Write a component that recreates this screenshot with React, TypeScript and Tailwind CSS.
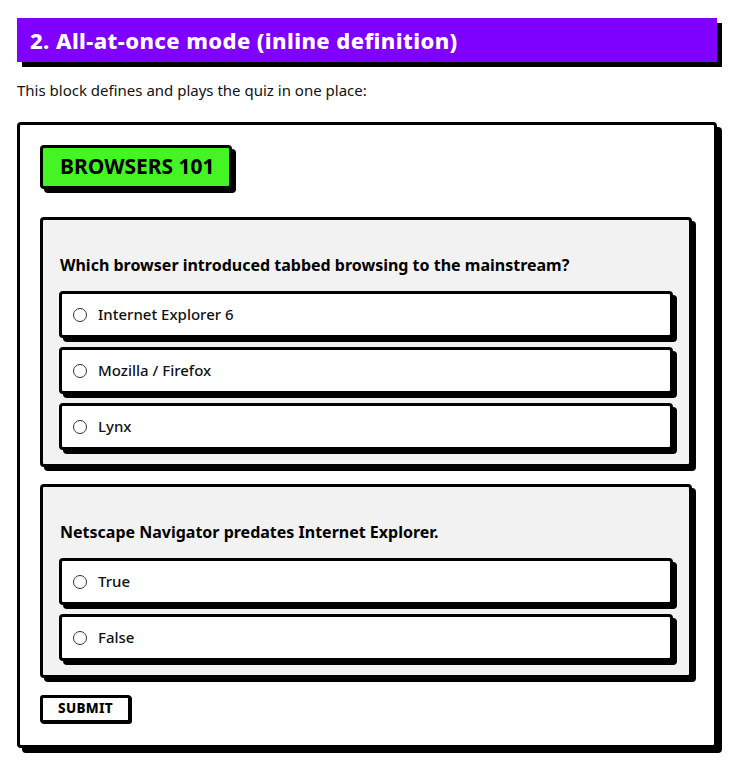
import { useState } from "react";

const QUESTIONS = [
  {
    id: "q1",
    text: "Which browser introduced tabbed browsing to the mainstream?",
    options: ["Internet Explorer 6", "Mozilla / Firefox", "Lynx"],
  },
  {
    id: "q2",
    text: "Netscape Navigator predates Internet Explorer.",
    options: ["True", "False"],
  },
];

function Option({ name, label, checked, onPick }: { name: string; label: string; checked: boolean; onPick: () => void }) {
  return (
    <label className="flex h-[47px] cursor-pointer items-center gap-[11px] rounded-[4px] border-[3px] border-black bg-white pl-[11px] shadow-[4px_4px_0_#000]">
      <input
        type="radio"
        name={name}
        checked={checked}
        onChange={onPick}
        className="m-0 h-[14px] w-[14px] appearance-none rounded-full border border-[#333] bg-white checked:border-[4px] checked:border-black"
      />
      <span className="text-[15px] font-medium text-[#111]">{label}</span>
    </label>
  );
}

export default function App() {
  const [answers, setAnswers] = useState<Record<string, string>>({});

  return (
    <div className="min-h-screen bg-white px-[17px] pt-[18px] font-['Noto_Sans',sans-serif] text-black">
      <h2 className="flex h-[44px] w-[700px] items-center bg-[#7f00ff] pl-[13px] text-[22px] font-extrabold tracking-[0.4px] text-white shadow-[5px_5px_0_#000]">
        2. All-at-once mode (inline definition)
      </h2>
      <p className="mt-[17px] text-[15px] leading-[22px] text-[#111]">This block defines and plays the quiz in one place:</p>

      <div className="mt-[21px] w-[700px] rounded-[4px] border-[3px] border-black bg-white pb-[22px] pl-[20px] pr-[22px] pt-[20px] shadow-[5px_5px_0_#000]">
        <div className="inline-flex h-[44px] items-center rounded-[4px] border-[3px] border-black bg-[#44f523] pl-[17px] pr-[14px] text-[21px] font-bold text-black shadow-[4px_4px_0_#000]">
          BROWSERS 101
        </div>

        <div className="mt-[28px] flex flex-col gap-[17px]">
          {QUESTIONS.map((q) => (
            <div
              key={q.id}
              className="rounded-[4px] border-[3px] border-black bg-[#f2f2f2] px-[16px] pb-[14px] pt-[34px] shadow-[4px_4px_0_#000]"
            >
              <div className="pl-[1px] text-[16px] font-bold leading-[22px]">{q.text}</div>
              <div className="mt-[15px] flex flex-col gap-[9px]">
                {q.options.map((o) => (
                  <Option
                    key={o}
                    name={q.id}
                    label={o}
                    checked={answers[q.id] === o}
                    onPick={() => setAnswers({ ...answers, [q.id]: o })}
                  />
                ))}
              </div>
            </div>
          ))}
        </div>

        <button className="mt-[17px] h-[28px] rounded-[3px] border-[3px] border-black bg-white px-[15px] text-[13.5px] font-extrabold leading-none tracking-[0.3px] shadow-[1px_1px_0_#000]">
          SUBMIT
        </button>
      </div>
    </div>
  );
}
